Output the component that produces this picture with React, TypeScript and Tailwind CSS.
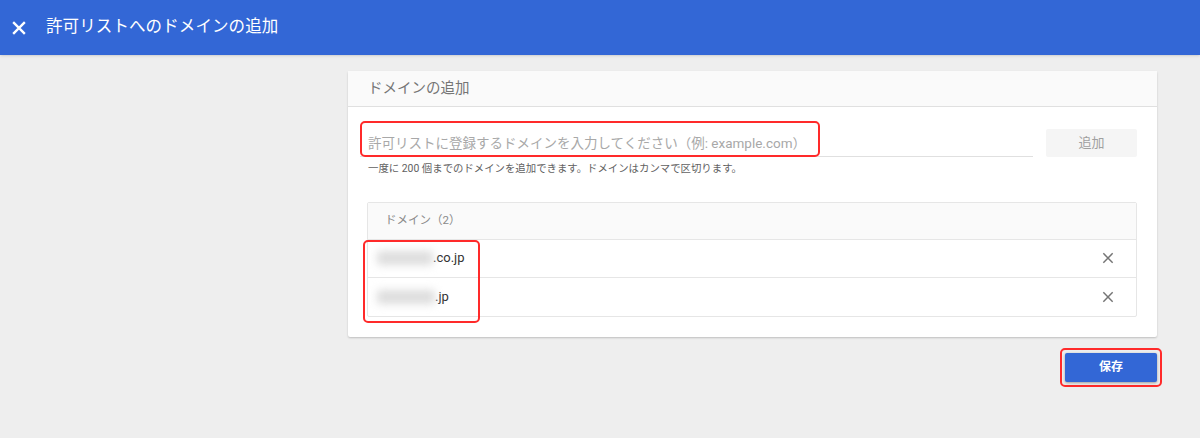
import React from "react";

const domains = [
  { blur: 56, suffix: ".co.jp" },
  { blur: 58, suffix: ".jp" },
];

const CloseIcon = ({
  size,
  color,
  stroke = 2.2,
}: {
  size: number;
  color: string;
  stroke?: number;
}) => (
  <svg width={size} height={size} viewBox="0 0 24 24">
    <path
      d="M5 5 L19 19 M19 5 L5 19"
      stroke={color}
      strokeWidth={stroke}
      fill="none"
    />
  </svg>
);

const App = () => {
  return (
    <div
      className="w-[1200px] h-[438px] bg-[#eeeeee] flex flex-col overflow-hidden"
      style={{ fontFamily: "Roboto, 'Noto Sans CJK JP', sans-serif" }}
    >
      <div className="h-[55px] bg-[#3367d6] flex items-center pl-[9px] shadow-sm">
        <CloseIcon size={20} color="#ffffff" stroke={2.8} />
        <span className="ml-[17px] text-white text-[16.5px] tracking-[0.1px]">
          許可リストへのドメインの追加
        </span>
      </div>

      <div className="flex flex-col items-end pr-[43px] pt-[16px]">
        <div className="w-[809px] bg-white shadow-[0_1px_2px_rgba(0,0,0,0.2)] rounded-[2px]">
          <div className="h-[36px] bg-[#fafafa] border-b border-[#e0e0e0] flex items-center pl-[20px] text-[14.5px] text-[#757575]">
            ドメインの追加
          </div>

          <div className="px-[12px] pt-[16px]">
            <div className="flex items-start">
              <div className="relative w-[673px] h-[34px] border-b border-[#e0e0e0] flex items-end pb-[3px]">
                <span className="pl-[8px] text-[13.5px] text-[#a8a8a8] leading-[20px]">
                  許可リストに登録するドメインを入力してください（例: example.com）
                </span>
                <div className="absolute left-0 -top-[2px] w-[460px] h-[36px] border-2 border-[#ff2a2a] rounded-[5px]" />
              </div>
              <button className="ml-[13px] mt-[6px] w-[91px] h-[28px] bg-[#f5f5f5] rounded-[2px] text-[13px] text-[#a0a0a0]">
                追加
              </button>
            </div>
            <div className="pl-[8px] pt-[4px] text-[10.4px] text-[#616161]">
              一度に 200 個までのドメインを追加できます。ドメインはカンマで区切ります。
            </div>

            <div className="mt-[25px] ml-[7px] w-[770px] border border-[#e6e6e6] rounded-[2px] mb-[20px] relative">
              <div className="h-[37px] bg-[#fafafa] border-b border-[#e6e6e6] flex items-center pl-[17px] text-[11.5px] text-[#8a8a8a]">
                ドメイン（2）
              </div>
              {domains.map((d, i) => (
                <div
                  key={i}
                  className={`h-[38px] flex items-center justify-between pl-[9px] pr-[20px] ${i === 0 ? "border-b border-[#e6e6e6]" : ""}`}
                >
                  <div className="flex items-center text-[13px] text-[#333333]">
                    <span
                      className="inline-block h-[14px] bg-[#dddddd] blur-[4px] rounded-[2px]"
                      style={{ width: d.blur }}
                    />
                    <span>{d.suffix}</span>
                  </div>
                  <CloseIcon size={16} color="#757575" />
                </div>
              ))}
              <div className="absolute left-[-5px] top-[37px] w-[117px] h-[83px] border-2 border-[#ff2a2a] rounded-[5px]" />
            </div>
          </div>
        </div>

        <div className="mt-[11px] mr-[-5px] p-[3px] border-2 border-[#ff2a2a] rounded-[5px]">
          <button className="w-[92px] h-[29px] bg-[#3367d6] rounded-[2px] text-white text-[12px] font-bold shadow-[0_1px_3px_rgba(0,0,0,0.35)]">
            保存
          </button>
        </div>
      </div>
    </div>
  );
};

export default App;
